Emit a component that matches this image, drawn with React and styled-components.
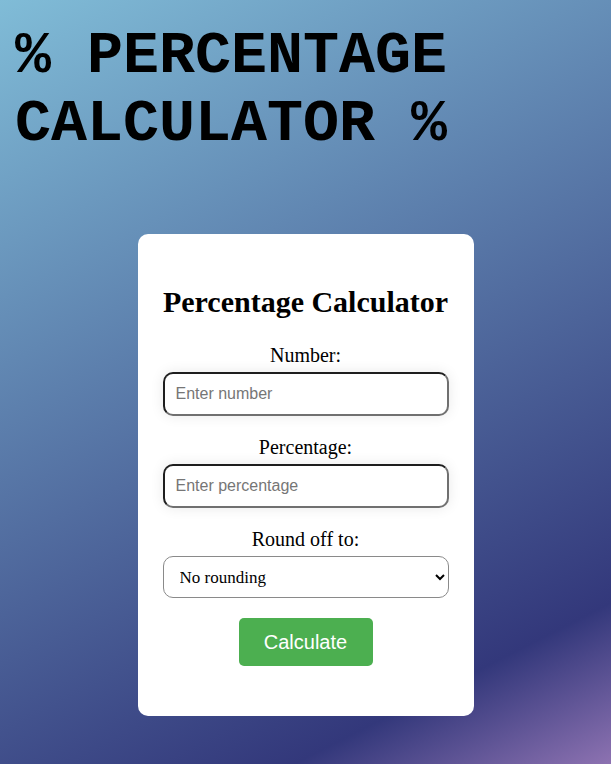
import React, { useState } from "react";
import styled, { createGlobalStyle } from "styled-components";

const Global = createGlobalStyle`
    html, body {
        margin: 0;
        padding: 0;
    }
    body {
        min-height: 100vh;
        background: linear-gradient(153deg, #80bcd7 0%, #33387b 85%, #8d72b1 100%);
        font-family: "Liberation Serif", "Times New Roman", serif;
    }
`

const Page = styled.div`
    min-height: 764px;
    display: flex;
    flex-direction: column;
`

const Heading = styled.h1`
    margin: 22px 0 0 15px;
    font-family: "Liberation Mono", "Courier New", monospace;
    font-weight: bold;
    font-size: 60px;
    line-height: 68px;
    color: #000;
`

const Card = styled.div`
    box-sizing: border-box;
    width: 336px;
    margin: 76px auto 0;
    padding: 0 25px 50px;
    background: #fff;
    border-radius: 10px;
    display: flex;
    flex-direction: column;
    align-items: stretch;
`

const Title = styled.h2`
    margin: 51px 0 25px;
    font-size: 30px;
    line-height: 34px;
    font-weight: bold;
    text-align: center;
`

const Label = styled.label`
    display: block;
    font-size: 20px;
    line-height: 23px;
    margin-bottom: 5px;
    text-align: center;
`

const Input = styled.input`
    box-sizing: border-box;
    width: 100%;
    height: 44px;
    margin-bottom: 20px;
    padding: 0 11px;
    border: 2px solid;
    border-color: #1e1e1e #707070 #707070 #1e1e1e;
    border-radius: 10px;
    box-shadow: 0 0 14px rgba(0, 0, 0, 0.09);
    font-family: "Liberation Sans", Arial, sans-serif;
    font-size: 16px;
    outline: none;

    &::placeholder {
        color: #767676;
    }
`

const Select = styled.select`
    box-sizing: border-box;
    width: 100%;
    height: 42px;
    margin-bottom: 20px;
    padding: 0 12px;
    border: 1px solid #8a8a8a;
    border-radius: 10px;
    background: #fff;
    font-family: "Liberation Serif", "Times New Roman", serif;
    font-size: 17px;
    color: #000;
`

const Button = styled.button`
    align-self: center;
    width: 134px;
    height: 48px;
    border: none;
    border-radius: 5px;
    background: #4caf50;
    color: #fff;
    font-family: "Liberation Sans", Arial, sans-serif;
    font-size: 20px;
    cursor: pointer;
`

export default function App() {
    const [num, setNum] = useState("");
    const [pct, setPct] = useState("");
    const [round, setRound] = useState("none");

    return (
        <>
            <Global />
            <Page>
                <Heading>% PERCENTAGE CALCULATOR %</Heading>
                <Card>
                    <Title>Percentage Calculator</Title>
                    <Label htmlFor="num">Number:</Label>
                    <Input id="num" type="number" placeholder="Enter number" value={num} onChange={e => setNum(e.target.value)} />
                    <Label htmlFor="pct">Percentage:</Label>
                    <Input id="pct" type="number" placeholder="Enter percentage" value={pct} onChange={e => setPct(e.target.value)} />
                    <Label htmlFor="round">Round off to:</Label>
                    <Select id="round" value={round} onChange={e => setRound(e.target.value)}>
                        <option value="none">No rounding</option>
                        <option value="0">Whole number</option>
                        <option value="1">1 decimal place</option>
                        <option value="2">2 decimal places</option>
                    </Select>
                    <Button>Calculate</Button>
                </Card>
            </Page>
        </>
    );
}
